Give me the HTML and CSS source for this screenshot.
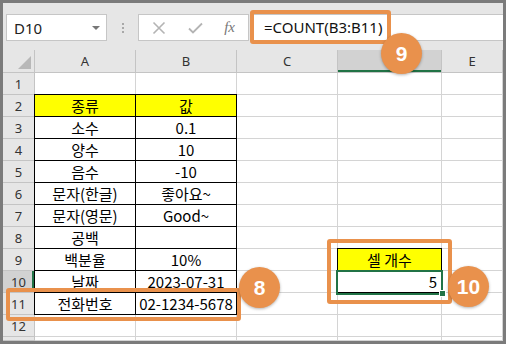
FILE: index.html
```html
<html>
    <head>
        <link rel="stylesheet" href="styles.css">
    </head>
    <body>
        <div class="frame">
            <div class="toolbar">
                <div class="namebox">
                    <span>D10</span>
                    <span class="arrow"></span>
                </div>
                <div class="grip"><i></i><i></i><i></i></div>
                <div class="fxbtns">
                    <svg width="14" height="14" viewBox="0 0 14 14"><path d="M1.5 1.5 L12.5 12.5 M12.5 1.5 L1.5 12.5" stroke="#b4b4b4" stroke-width="1.6" fill="none"/></svg>
                    <svg width="15" height="12" viewBox="0 0 15 12"><path d="M1 6.5 L5 10.5 L14 1.5" stroke="#b4b4b4" stroke-width="1.8" fill="none"/></svg>
                    <span class="fx">fx</span>
                </div>
                <div class="formula">=COUNT(B3:B11)</div>
            </div>
            <div class="sheet">
                <div class="ch corner"><span class="tri"></span></div>
                <div class="ch">A</div>
                <div class="ch">B</div>
                <div class="ch">C</div>
                <div class="ch sel">D</div>
                <div class="ch">E</div>

                <div class="rh">1</div><div class="c"></div><div class="c"></div><div class="c"></div><div class="c"></div><div class="c"></div>

                <div class="rh">2</div><div class="c t yl left top">종류</div><div class="c t yl top">값</div><div class="c"></div><div class="c"></div><div class="c"></div>

                <div class="rh">3</div><div class="c t left">소수</div><div class="c t">0.1</div><div class="c"></div><div class="c"></div><div class="c"></div>

                <div class="rh">4</div><div class="c t left">양수</div><div class="c t">10</div><div class="c"></div><div class="c"></div><div class="c"></div>

                <div class="rh">5</div><div class="c t left">음수</div><div class="c t">-10</div><div class="c"></div><div class="c"></div><div class="c"></div>

                <div class="rh">6</div><div class="c t left">문자(한글)</div><div class="c t">좋아요~</div><div class="c"></div><div class="c"></div><div class="c"></div>

                <div class="rh">7</div><div class="c t left">문자(영문)</div><div class="c t">Good~</div><div class="c"></div><div class="c"></div><div class="c"></div>

                <div class="rh">8</div><div class="c t left">공백</div><div class="c t"></div><div class="c"></div><div class="c"></div><div class="c"></div>

                <div class="rh">9</div><div class="c t left">백분율</div><div class="c t">10%</div><div class="c"></div><div class="c t yl left top">셀 개수</div><div class="c"></div>

                <div class="rh rsel">10</div><div class="c t left">날짜</div><div class="c t">2023-07-31</div><div class="c"></div><div class="c t num">5</div><div class="c"></div>

                <div class="rh">11</div><div class="c t left">전화번호</div><div class="c t">02-1234-5678</div><div class="c"></div><div class="c"></div><div class="c"></div>

                <div class="rh">12</div><div class="c"></div><div class="c"></div><div class="c"></div><div class="c"></div><div class="c"></div>

                <div class="rh"></div><div class="c"></div><div class="c"></div><div class="c"></div><div class="c"></div><div class="c"></div>
            </div>

            <div class="selection"></div>
            <div class="handle"></div>

            <div class="mark mark-formula"></div>
            <div class="mark mark-phone"></div>
            <div class="mark mark-count"></div>
            <div class="badge badge-9">9</div>
            <div class="badge badge-8">8</div>
            <div class="badge badge-10">10</div>
        </div>
    </body>
</html>
```

FILE: styles.css
```css
body {
    margin: 0;
    background: #7b7b7b;
    font-family: 'Noto Sans', sans-serif;
}
.frame {
    position: relative;
    margin: 3px;
    width: 500px;
    height: 338px;
    background: #e6e6e6;
    overflow: hidden;
}

/* formula bar */
.toolbar {
    display: flex;
    align-items: flex-start;
    height: 47px;
    padding: 11px 0 0 3px;
    box-sizing: border-box;
}
.namebox {
    display: flex;
    align-items: center;
    justify-content: space-between;
    width: 101px;
    height: 27px;
    padding: 0 6px 0 7px;
    box-sizing: border-box;
    background: #fff;
    border: 1px solid #c6c6c6;
    font-size: 15px;
    color: #222;
}
.arrow {
    width: 0;
    height: 0;
    border-left: 4px solid transparent;
    border-right: 4px solid transparent;
    border-top: 4px solid #777;
}
.grip {
    display: flex;
    flex-direction: column;
    align-items: center;
    justify-content: center;
    gap: 2px;
    width: 31px;
    height: 27px;
}
.grip i {
    width: 2px;
    height: 2px;
    background: #a8a8a8;
}
.fxbtns {
    display: flex;
    align-items: center;
    justify-content: space-between;
    width: 111px;
    height: 27px;
    padding: 0 13px 0 13px;
    box-sizing: border-box;
    background: #fff;
    border: 1px solid #c6c6c6;
}
.fx {
    font-family: 'Liberation Serif', serif;
    font-style: italic;
    font-size: 15px;
    color: #777;
}
.formula {
    flex: 1;
    height: 27px;
    line-height: 25px;
    padding-left: 14px;
    margin-left: 1px;
    box-sizing: border-box;
    background: #fff;
    border-top: 1px solid #c6c6c6;
    border-bottom: 1px solid #c6c6c6;
    font-size: 15px;
    color: #111;
}

/* grid */
.sheet {
    display: grid;
    grid-template-columns: 32px 101px 101px 101px 104px 61px;
    grid-template-rows: 23px repeat(12, 22px) 4px;
    background: #fff;
}
.ch, .rh {
    display: flex;
    align-items: center;
    justify-content: center;
    background: #e6e6e6;
    border-right: 1px solid #c4c4c4;
    border-bottom: 1px solid #c4c4c4;
    box-sizing: border-box;
    font-size: 13px;
    color: #333;
}
.ch.corner {
    position: relative;
}
.tri {
    position: absolute;
    right: 3px;
    bottom: 3px;
    width: 0;
    height: 0;
    border-left: 13px solid transparent;
    border-bottom: 13px solid #b8b8b8;
}
.ch.sel {
    background: #d2d2d2;
    box-shadow: inset 0 -2px 0 #217346;
}
.rh.rsel {
    background: #d2d2d2;
    box-shadow: inset -2px 0 0 #217346;
}
.c {
    display: flex;
    align-items: center;
    justify-content: center;
    border-right: 1px solid #d4d4d4;
    border-bottom: 1px solid #d4d4d4;
    box-sizing: border-box;
    font-family: 'Noto Sans CJK KR', 'Noto Sans', sans-serif;
    font-size: 15px;
    color: #000;
    white-space: nowrap;
}
.c.t {
    border-right-color: #000;
    border-bottom-color: #000;
}
.c.yl {
    background: #ffff00;
}
.c.left {
    box-shadow: -1px 0 0 #000;
}
.c.top {
    box-shadow: 0 -1px 0 #000;
}
.c.left.top {
    box-shadow: -1px 0 0 #000, 0 -1px 0 #000, -1px -1px 0 #000;
}
.c.num {
    justify-content: flex-end;
    padding-right: 4px;
}

/* selection of D10 */
.selection {
    position: absolute;
    left: 333px;
    top: 267px;
    width: 107px;
    height: 25px;
    border: 2px solid #217346;
    box-sizing: border-box;
}
.handle {
    position: absolute;
    left: 436px;
    top: 287px;
    width: 5px;
    height: 5px;
    background: #217346;
    border: 1px solid #fff;
}

/* annotations */
.mark {
    position: absolute;
    border: 4px solid #e9914c;
    border-radius: 3px;
    box-sizing: border-box;
}
.mark-formula {
    left: 247px;
    top: 7px;
    width: 141px;
    height: 34px;
}
.mark-phone {
    left: 3px;
    top: 285px;
    width: 235px;
    height: 33px;
}
.mark-count {
    left: 324px;
    top: 236px;
    width: 125px;
    height: 65px;
}
.badge {
    position: absolute;
    width: 41px;
    height: 41px;
    border-radius: 50%;
    background: #e9914c;
    box-shadow: 0 1px 3px rgba(0, 0, 0, 0.3);
    color: #fff;
    font-family: 'Liberation Sans', sans-serif;
    font-weight: bold;
    font-size: 21px;
    line-height: 41px;
    text-align: center;
}
.badge-9 {
    left: 378px;
    top: 30px;
}
.badge-8 {
    left: 236px;
    top: 264px;
}
.badge-10 {
    left: 445px;
    top: 263px;
}
```
